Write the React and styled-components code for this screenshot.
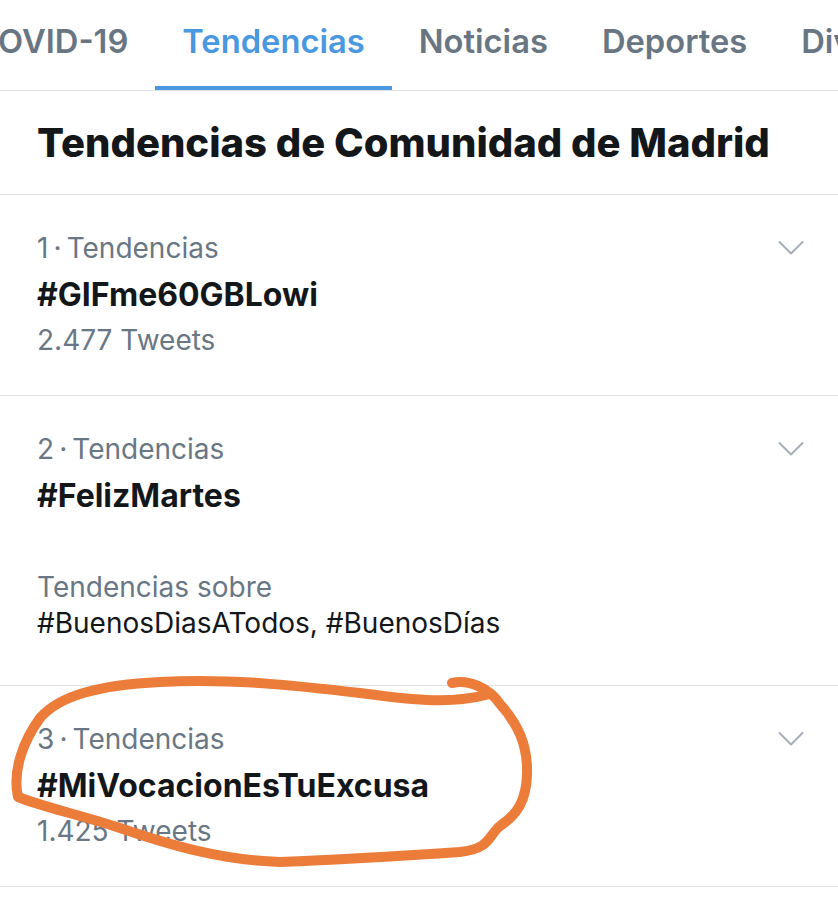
import React from "react";
import styled, { createGlobalStyle } from "styled-components";

const GlobalStyle = createGlobalStyle`
  html, body { margin: 0; padding: 0; background: #ffffff; }
  body { font-family: Inter, "Noto Sans", "Liberation Sans", sans-serif; -webkit-font-smoothing: antialiased; }
`;

const Page = styled.div`
  position: relative;
  width: 838px;
  height: 900px;
  overflow: hidden;
  background: #fff;
`;

const TabBar = styled.nav`
  height: 91px;
  box-sizing: border-box;
  border-bottom: 1px solid #dfe2e5;
  overflow: hidden;
`;

const TabRow = styled.div`
  display: flex;
  margin-left: -53px;
  white-space: nowrap;
`;

const Tab = styled.div`
  box-sizing: border-box;
  height: 90px;
  padding: 21px 27px 0;
  font-size: 32.7px;
  line-height: 40px;
  font-weight: 600;
  color: ${(p) => (p.$active ? "#4a98e0" : "#687684")};
  border-bottom: 4px solid ${(p) => (p.$active ? "#4a98e0" : "transparent")};
  flex: none;
`;

const Header = styled.h1`
  margin: 0;
  box-sizing: border-box;
  height: 104px;
  padding: 0 37px;
  display: flex;
  align-items: center;
  font-size: 40px;
  font-weight: 800;
  color: #14171a;
  border-bottom: 1px solid #dfe2e5;
`;

const Item = styled.section`
  padding: 30px 34px ${(p) => (p.$tall ? "44px" : "34px")} 37px;
  border-bottom: 1px solid #dfe2e5;
`;

const TopRow = styled.div`
  display: flex;
  align-items: center;
  justify-content: space-between;
`;

const Meta = styled.div`
  font-size: 28px;
  line-height: 46px;
  color: #697785;
  font-weight: 400;
`;

const Count = styled(Meta)`
  line-height: 42px;
`;

const Title = styled.div`
  font-size: 32px;
  line-height: 48px;
  font-weight: 700;
  color: #14171a;
`;

const Context = styled.div`
  margin-top: 49px;
`;

const ContextLabel = styled.div`
  font-size: 28px;
  line-height: 36px;
  color: #697785;
`;

const ContextTags = styled.div`
  font-size: 28px;
  line-height: 36px;
  color: #14171a;
`;

const Chevron = () => (
  <svg width="26" height="16" viewBox="0 0 26 16" fill="none">
    <path d="M1.5 2 L13 13.5 L24.5 2" stroke="#a6afb8" strokeWidth="2" strokeLinecap="round" strokeLinejoin="round" />
  </svg>
);

const Scribble = styled.svg`
  position: absolute;
  left: 0;
  top: 0;
  pointer-events: none;
`;

const tabs = ["COVID-19", "Tendencias", "Noticias", "Deportes", "Diversión"];

const trends = [
  { n: 1, tag: "#GIFme60GBLowi", count: "2.477 Tweets" },
  { n: 2, tag: "#FelizMartes", context: "#BuenosDiasATodos, #BuenosDías" },
  { n: 3, tag: "#MiVocacionEsTuExcusa", count: "1.425 Tweets" },
];

export default function App() {
  return (
    <Page>
      <GlobalStyle />
      <TabBar>
        <TabRow>
          {tabs.map((t) => (
            <Tab key={t} $active={t === "Tendencias"}>
              {t}
            </Tab>
          ))}
        </TabRow>
      </TabBar>
      <Header>Tendencias de Comunidad de Madrid</Header>
      {trends.map((t) => (
        <Item key={t.n} $tall={!!t.context}>
          <TopRow>
            <Meta>{t.n}{"\u2009·\u2009"}Tendencias</Meta>
            <Chevron />
          </TopRow>
          <Title>{t.tag}</Title>
          {t.count && <Count>{t.count}</Count>}
          {t.context && (
            <Context>
              <ContextLabel>Tendencias sobre</ContextLabel>
              <ContextTags>{t.context}</ContextTags>
            </Context>
          )}
        </Item>
      ))}
      <Scribble width="838" height="900" viewBox="0 0 838 900">
        <path
          d="M452 683 C470 679, 490 689, 500 704 C518 724, 528 745, 527 775 C526 800, 518 814, 500 826 C488 836, 490 849, 460 852 C400 856, 330 860, 280 862 C220 860, 170 845, 120 828 C80 815, 40 806, 18 797 C12 770, 24 740, 40 718 C60 695, 100 685, 160 682 C230 678, 300 686, 360 693 C420 701, 452 704, 490 694"
          stroke="#ec7c3a"
          strokeWidth="10"
          strokeLinecap="round"
          strokeLinejoin="round"
          fill="none"
        />
      </Scribble>
    </Page>
  );
}
